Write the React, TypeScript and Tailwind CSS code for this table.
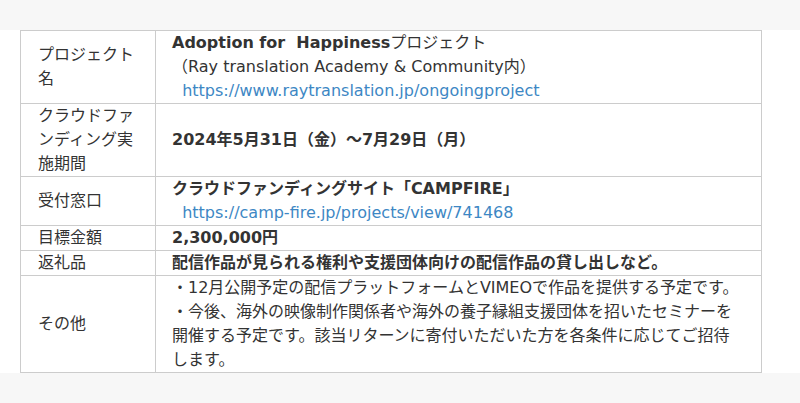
export default function App() {
  return (
    <div
      className="h-[403px] w-full bg-[#f7f7f7] pt-[30px] text-[16px] leading-[24px] text-[#333333]"
      style={{ fontFamily: '"DejaVu Sans", "Noto Sans CJK JP", sans-serif' }}
    >
      <div className="bg-white pl-[20px] pr-[38px]">
        <table className="w-full table-fixed border-collapse">
          <colgroup>
            <col className="w-[135px]" />
            <col />
          </colgroup>
          <tbody>
            {/* プロジェクト名 */}
            <tr>
              <td className="border border-[#cccccc] pl-[17px] pr-4 align-middle">
                プロジェクト名
              </td>
              <td className="border border-[#cccccc] px-4 align-middle">
                <strong className="font-bold">Adoption for&nbsp; Happiness</strong>
                プロジェクト
                <br />
                （Ray translation Academy &amp; Community内）
                <br />
                &nbsp;&nbsp;
                <a href="#" className="text-[#3d87c4]">
                  https://www.raytranslation.jp/ongoingproject
                </a>
              </td>
            </tr>

            {/* 実施期間 */}
            <tr>
              <td className="border border-[#cccccc] pl-[17px] pr-4 align-middle">
                クラウドファンディング実施期間
              </td>
              <td className="border border-[#cccccc] px-4 align-middle font-bold">
                2024年5月31日（金）～7月29日（月）
              </td>
            </tr>

            {/* 受付窓口 */}
            <tr>
              <td className="border border-[#cccccc] pl-[17px] pr-4 align-middle">
                受付窓口
              </td>
              <td className="border border-[#cccccc] px-4 align-middle">
                <strong className="font-bold">クラウドファンディングサイト「CAMPFIRE」</strong>
                <br />
                &nbsp;&nbsp;
                <a href="#" className="text-[#3d87c4]">
                  https://camp-fire.jp/projects/view/741468
                </a>
              </td>
            </tr>

            {/* 目標金額 */}
            <tr>
              <td className="border border-[#cccccc] pl-[17px] pr-4 align-middle">
                目標金額
              </td>
              <td className="border border-[#cccccc] px-4 align-middle font-bold">
                2,300,000円
              </td>
            </tr>

            {/* 返礼品 */}
            <tr>
              <td className="border border-[#cccccc] pl-[17px] pr-4 align-middle">
                返礼品
              </td>
              <td className="border border-[#cccccc] px-4 align-middle font-bold">
                配信作品が見られる権利や支援団体向けの配信作品の貸し出しなど。
              </td>
            </tr>

            {/* その他 */}
            <tr>
              <td className="border border-[#cccccc] pl-[17px] pr-4 align-middle">
                その他
              </td>
              <td className="border border-[#cccccc] px-4 align-middle">
                ・12月公開予定の配信プラットフォームとVIMEOで作品を提供する予定です。
                <br />
                ・今後、海外の映像制作関係者や海外の養子縁組支援団体を招いたセミナーを開催する予定です。該当リターンに寄付いただいた方を各条件に応じてご招待します。
              </td>
            </tr>
          </tbody>
        </table>
      </div>
    </div>
  )
}
